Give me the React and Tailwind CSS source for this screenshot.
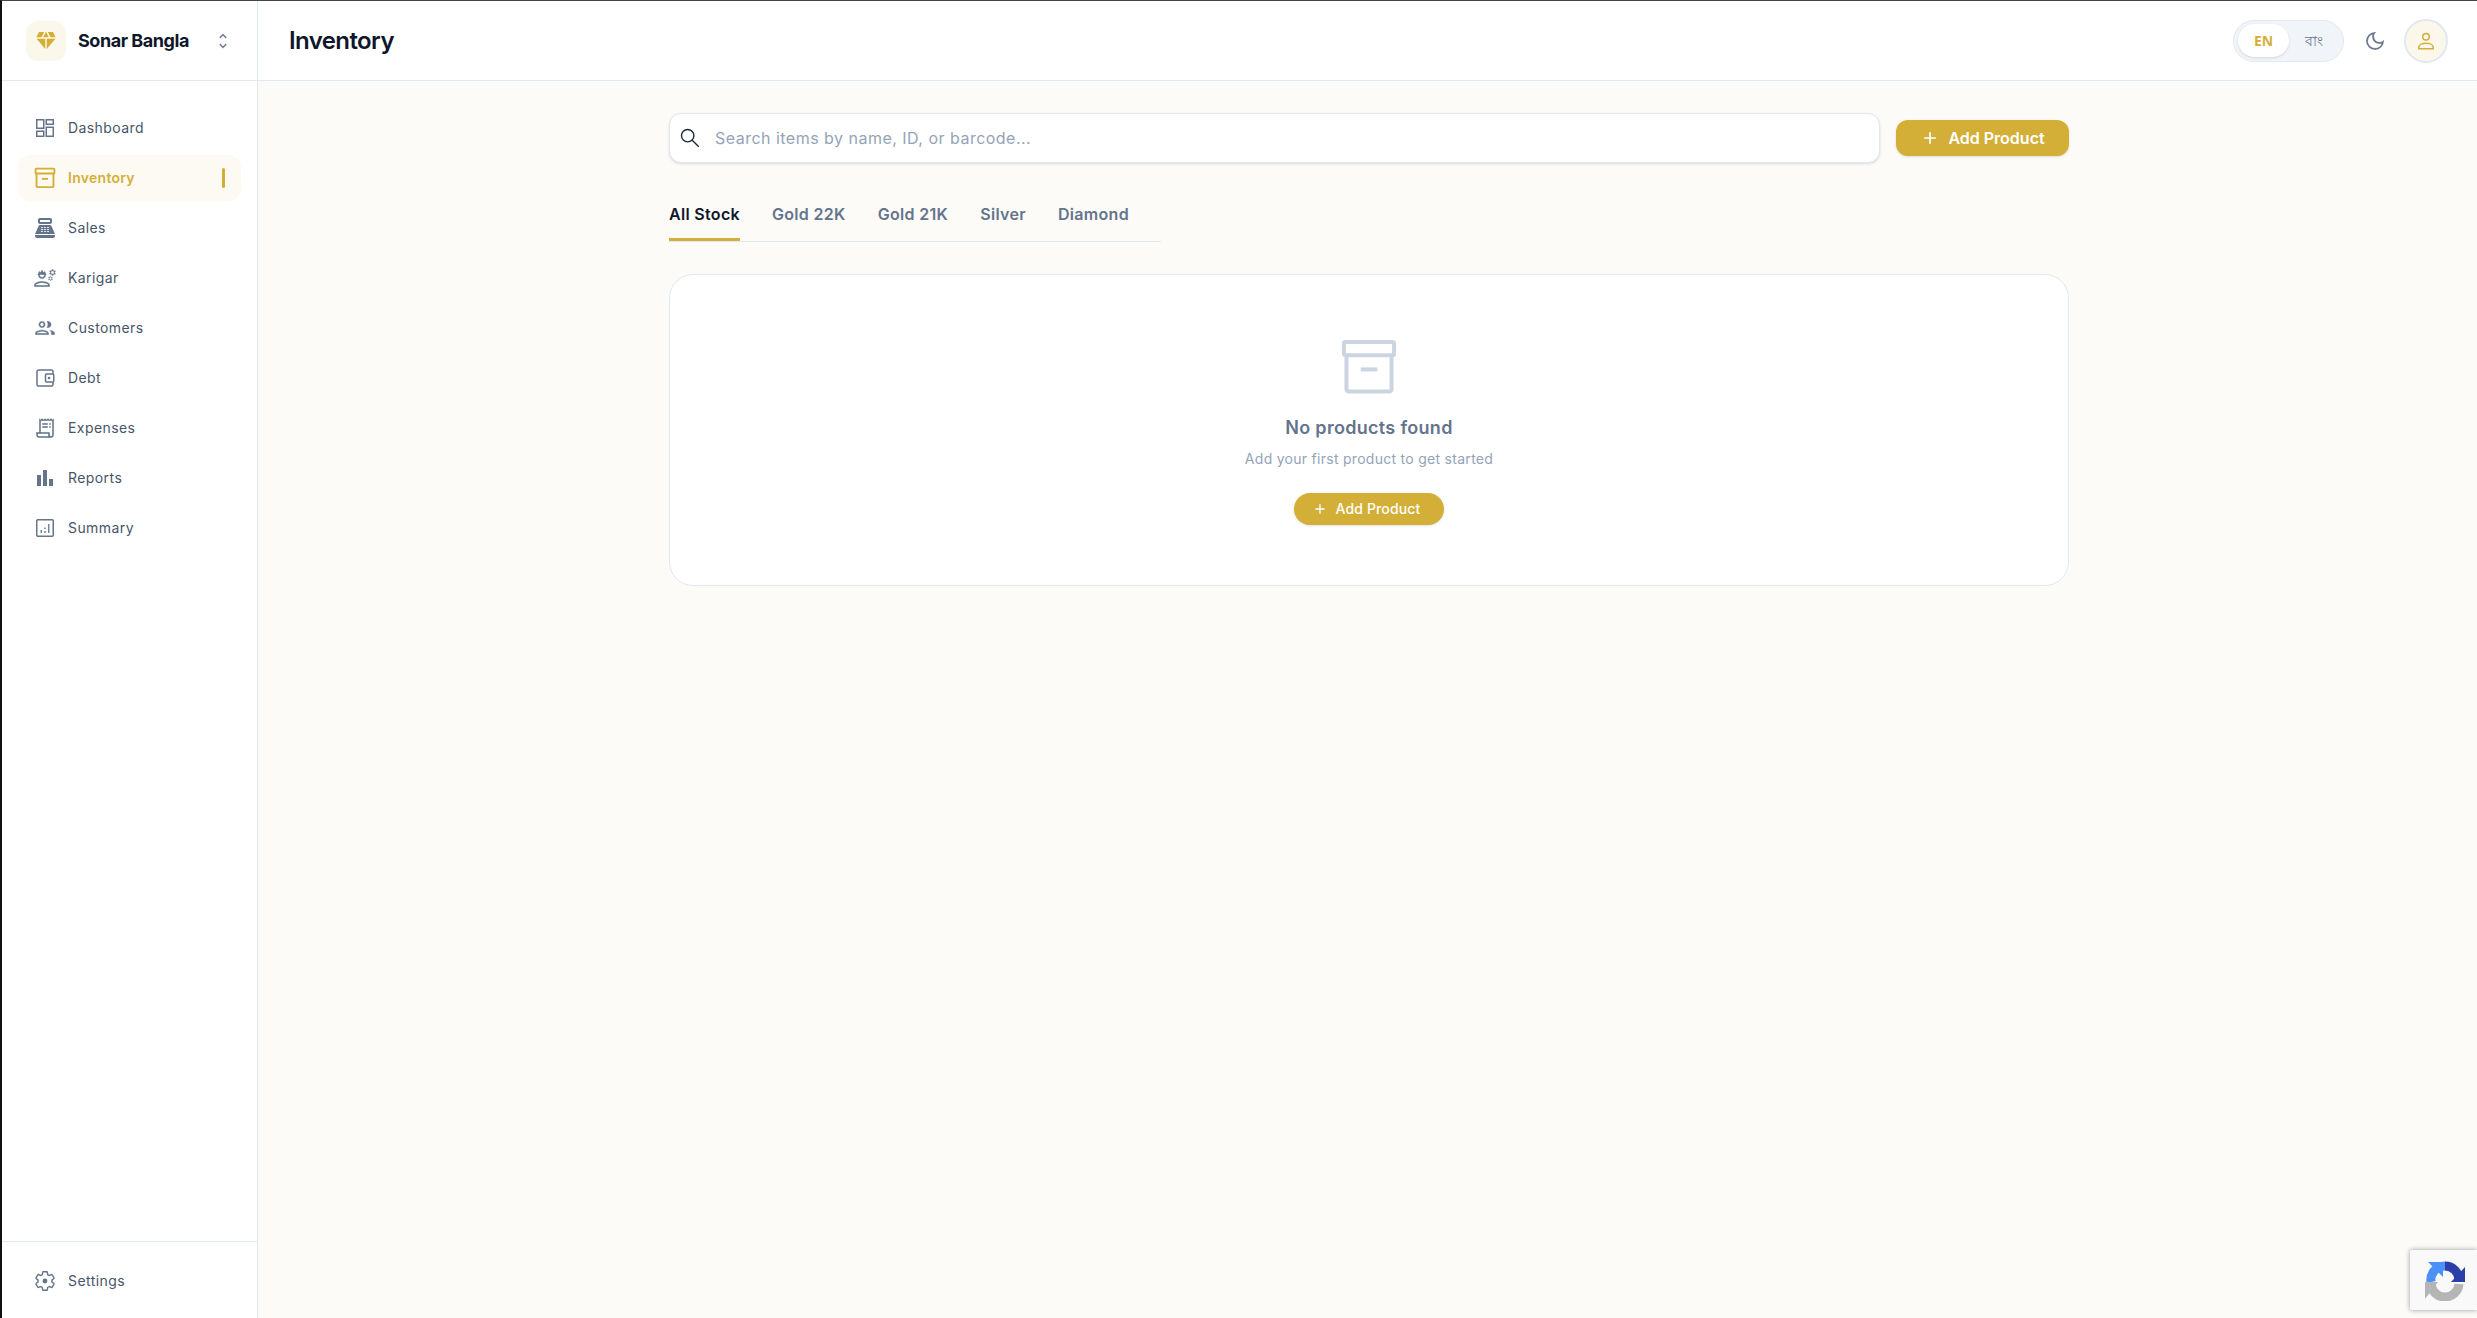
import React from "react";
import {
  MdPointOfSale, MdOutlineEngineering, MdOutlineGroup,
  MdOutlineReceiptLong, MdBarChart,
  MdAdd, MdOutlineDarkMode, MdUnfoldMore, MdDiamond,
} from "react-icons/md";

const Svg = ({ size = 24, sw = 1.5, className, children }) => (
  <svg width={size} height={size} viewBox="0 0 24 24" fill="none" stroke="currentColor" strokeWidth={sw} className={className}>
    {children}
  </svg>
);

const DashboardIcon = (p) => (
  <Svg {...p}>
    <rect x="3.75" y="3.75" width="7" height="8.5" />
    <rect x="13.25" y="3.75" width="7" height="4.5" />
    <rect x="3.75" y="15.25" width="7" height="5" />
    <rect x="13.25" y="11.25" width="7" height="9" />
  </Svg>
);

const BoxIcon = (p) => (
  <Svg {...p}>
    <rect x="2.6" y="2.65" width="18.8" height="4.9" rx="0.6" />
    <path d="M3.55 7.55V20.4a.75.75 0 0 0 .75.75h15.4a.75.75 0 0 0 .75-.75V7.55" />
    <path d="M8.9 12.9h6.2" />
  </Svg>
);

const WalletIcon = (p) => (
  <Svg {...p}>
    <path d="M20 8V5.5A1.5 1.5 0 0 0 18.5 4h-13A1.5 1.5 0 0 0 4 5.5v13A1.5 1.5 0 0 0 5.5 20h13a1.5 1.5 0 0 0 1.5-1.5V16" />
    <rect x="12.5" y="8" width="8.25" height="8" rx="1" />
    <circle cx="16" cy="12" r="1.3" fill="currentColor" stroke="none" />
  </Svg>
);

const SummaryIcon = (p) => (
  <Svg {...p}>
    <rect x="3.75" y="3.75" width="16.5" height="16.5" rx="1" />
    <path d="M8.25 14v3M12 11.5v1.6M12 15v2M15.75 8v9" strokeWidth="1.3" />
  </Svg>
);

const SettingsIcon = (p) => (
  <Svg {...p}>
    <g transform="translate(12 12) scale(0.93) translate(-12 -12)">
      <path d="M19.43 12.98c.04-.32.07-.64.07-.98 0-.34-.03-.66-.07-.98l2.11-1.65c.19-.15.24-.42.12-.64l-2-3.46c-.09-.16-.26-.25-.44-.25-.06 0-.12.01-.17.03l-2.49 1c-.52-.4-1.08-.73-1.69-.98l-.38-2.65C14.46 2.18 14.25 2 14 2h-4c-.25 0-.46.18-.49.42l-.38 2.65c-.61.25-1.17.59-1.69.98l-2.49-1c-.06-.02-.12-.03-.18-.03-.17 0-.34.09-.43.25l-2 3.46c-.13.22-.07.49.12.64l2.11 1.65c-.04.32-.07.65-.07.98 0 .33.03.66.07.98l-2.11 1.65c-.19.15-.24.42-.12.64l2 3.46c.09.16.26.25.44.25.06 0 .12-.01.17-.03l2.49-1c.52.4 1.08.73 1.69.98l.38 2.65c.03.24.24.42.49.42h4c.25 0 .46-.18.49-.42l.38-2.65c.61-.25 1.17-.59 1.69-.98l2.49 1c.06.02.12.03.18.03.17 0 .34-.09.43-.25l2-3.46c.12-.22.07-.49-.12-.64l-2.11-1.65z" />
    </g>
    <circle cx="12" cy="12" r="2.4" fill="currentColor" stroke="none" />
  </Svg>
);

const PersonIcon = (p) => (
  <Svg {...p}>
    <circle cx="12" cy="7.8" r="3.25" />
    <path d="M4.75 19.75v-1.3c0-2.6 3.3-4.2 7.25-4.2s7.25 1.6 7.25 4.2v1.3z" />
  </Svg>
);

const SearchIcon = (p) => (
  <Svg {...p}>
    <circle cx="9.7" cy="9.7" r="6.2" />
    <path d="M14.2 14.2l6.6 6.6" />
  </Svg>
);

const thin = (I, w = "0.45") => (p) => <I {...p} stroke="#ffffff" strokeWidth={w} />;
const NavEng = thin(MdOutlineEngineering);
const NavGroup = thin(MdOutlineGroup);
const NavReceipt = thin(MdOutlineReceiptLong);
const Moon = thin(MdOutlineDarkMode, "0.25");
const Chevrons = thin(MdUnfoldMore);

const nav = [
  ["Dashboard", DashboardIcon],
  ["Inventory", BoxIcon, true],
  ["Sales", MdPointOfSale],
  ["Karigar", NavEng],
  ["Customers", NavGroup],
  ["Debt", WalletIcon],
  ["Expenses", NavReceipt],
  ["Reports", MdBarChart],
  ["Summary", SummaryIcon],
];

function NavItem({ label, Icon, active }) {
  return (
    <a className={active
      ? "flex h-[46px] items-center gap-[11px] rounded-xl bg-[#fcfaf3] px-[15px] text-[#d4af37]"
      : "flex h-[46px] items-center gap-[11px] rounded-xl px-[15px] text-[#475569]"}>
      {active
        ? <Icon size={24} sw={1.9} className="shrink-0 text-[#d4af37]" />
        : <Icon size={24} className="shrink-0 text-[#64748b]" />}
      <span className={active ? "flex-1 text-sm font-semibold tracking-[0.02em]" : "flex-1 text-sm font-normal tracking-[0.03em]"}>{label}</span>
      {active && <span className="mr-[1px] h-5 w-[3px] rounded-full bg-[#d4af37]" />}
    </a>
  );
}

function Recaptcha() {
  return (
    <div className="absolute bottom-2 right-0 flex h-[60px] w-[67px] items-center rounded-l-[2px] bg-[#f9f9f9] pl-[14px] shadow-[0_0_5px_rgba(128,128,128,0.8)]">
      <svg width="42" height="42" viewBox="0 0 42 42" fill="none">
        <path d="M7 23 A14 14 0 0 1 21 7" stroke="#4a90f5" strokeWidth="9" />
        <path d="M21 7 A14 14 0 0 1 35 21" stroke="#2a3fa8" strokeWidth="9" />
        <path d="M41 8 L41 23 L27 23 Z" fill="#2a3fa8" />
        <path d="M35 25 A14 14 0 0 1 7 23" stroke="#b5b5b5" strokeWidth="9" />
        <path d="M1 40 L1 23 L14 23 Z" fill="#b5b5b5" />
        <path d="M4 3 L19 3 L19 18 Z" fill="#4a90f5" />
      </svg>
    </div>
  );
}

export default function App() {
  return (
    <div className="relative flex h-screen overflow-hidden border-l-2 border-t border-l-[#111111] border-t-[#444444] bg-[#fcfbf8] font-['Inter','Noto_Sans',sans-serif]">
      <aside className="flex w-64 shrink-0 flex-col border-r border-[#e2e8f0] bg-white">
        <div className="flex h-20 shrink-0 items-center border-b border-[#e2e8f0] pl-6 pr-[24px]">
          <div className="flex h-10 w-10 items-center justify-center rounded-xl bg-[#fbf7ea]">
            <MdDiamond size={24} className="text-[#d4af37]" />
          </div>
          <span className="ml-3 flex-1 text-lg font-bold tracking-tight text-[#0f172a]">Sonar Bangla</span>
          <Chevrons size={20} className="text-[#64748b]" />
        </div>
        <nav className="flex flex-1 flex-col gap-1 px-4 pt-6">
          {nav.map(([l, I, a]) => <NavItem key={l} label={l} Icon={I} active={a} />)}
        </nav>
        <div className="flex h-[77px] shrink-0 flex-col justify-center border-t border-[#e2e8f0] px-4 pt-[2px]">
          <NavItem label="Settings" Icon={SettingsIcon} />
        </div>
      </aside>

      <div className="flex min-w-0 flex-1 flex-col">
        <header className="flex h-20 shrink-0 items-center justify-between border-b border-[#e2e8f0] bg-white pl-[31px] pr-[29px]">
          <h1 className="text-2xl font-semibold tracking-tight text-[#0f172a]">Inventory</h1>
          <div className="flex items-center">
            <div className="flex h-[42px] w-[111px] items-center rounded-full border border-[#e2e8f0] bg-[#f1f5f9] pl-1">
              <span className="flex h-[33px] w-[51px] items-center justify-center rounded-full bg-white font-['Noto_Sans',sans-serif] text-sm font-bold text-[#d4af37] shadow-sm">EN</span>
              <span className="flex h-8 w-[50px] items-center justify-center font-['Noto_Sans',sans-serif] text-sm font-medium text-[#64748b]">বাং</span>
            </div>
            <Moon size={24} className="ml-[19px] text-[#64748b]" />
            <div className="ml-[17px] flex h-11 w-11 items-center justify-center rounded-full border-2 border-[#e2e8f0] bg-[#fbf7ea]">
              <PersonIcon size={24} className="text-[#d4af37]" />
            </div>
          </div>
        </header>

        <main className="flex-1 pl-[27px] pr-6 pt-8">
          <div className="mx-auto w-[1400px] max-w-full">
            <div className="mb-[23px] flex items-center gap-4">
              <div className="flex h-[50px] flex-1 items-center rounded-xl border border-[#e2e8f0] bg-white pl-2 shadow-sm">
                <SearchIcon size={24} sw={1.4} className="text-[#1e293b]" />
                <input readOnly placeholder="Search items by name, ID, or barcode..." className="ml-[13px] flex-1 bg-transparent text-base tracking-[0.03em] text-[#0f172a] outline-none placeholder:text-[#94a3b8]" />
              </div>
              <button className="flex h-9 w-[173px] items-center justify-center gap-2 rounded-xl bg-[#d4af37] text-base font-semibold text-white shadow-sm">
                <MdAdd size={20} />
                Add Product
              </button>
            </div>

            <div className="mb-8 flex w-fit gap-8 border-b border-[#e2e8f0] pr-8">
              {["All Stock", "Gold 22K", "Gold 21K", "Silver", "Diamond"].map((t, i) => (
                <button key={t} className={i === 0
                  ? "border-b-[3px] border-[#d4af37] pb-3 pt-4 text-base font-semibold tracking-[0.02em] text-[#0f172a]"
                  : "border-b-[3px] border-transparent pb-3 pt-4 text-base font-semibold tracking-[0.02em] text-[#64748b]"}>{t}</button>
              ))}
            </div>

            <div className="flex flex-col items-center rounded-3xl border border-[#e2e8f0] bg-white py-[60px]">
              <BoxIcon size={64} className="text-[#cbd5e1]" />
              <h2 className="mt-[15px] text-lg font-semibold tracking-[0.017em] text-[#64748b]">No products found</h2>
              <p className="mt-[7px] text-sm tracking-[0.02em] text-[#94a3b8]">Add your first product to get started</p>
              <button className="mt-6 flex h-8 w-[150px] items-center justify-center gap-2 rounded-full bg-[#d4af37] pr-[6px] text-sm font-medium tracking-[0.01em] text-white shadow-sm">
                <MdAdd size={16} />
                Add Product
              </button>
            </div>
          </div>
        </main>
      </div>
      <Recaptcha />
    </div>
  );
}
